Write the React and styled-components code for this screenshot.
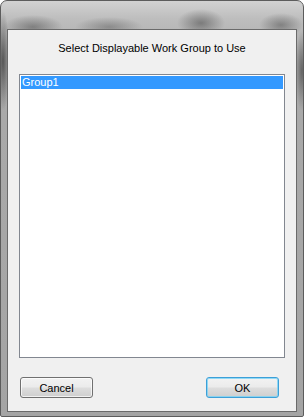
import React from "react";
import styled, {createGlobalStyle} from "styled-components";

const Global = createGlobalStyle`
  html, body {
    margin: 0;
    padding: 0;
    background: #ffffff;
  }
`;

const Frame = styled.div`
  box-sizing: border-box;
  width: 304px;
  height: 417px;
  border: 1px solid #5c5c5c;
  border-radius: 7px 7px 2px 2px;
  padding: 28px 6px 4px 6px;
  display: flex;
  background:
    radial-gradient(ellipse 30px 12px at 32px 26px, rgba(70, 70, 70, 0.5), transparent),
    radial-gradient(ellipse 34px 10px at 108px 26px, rgba(70, 70, 70, 0.4), transparent),
    radial-gradient(ellipse 24px 14px at 200px 22px, rgba(60, 60, 60, 0.5), transparent),
    radial-gradient(ellipse 22px 12px at 280px 24px, rgba(60, 60, 60, 0.45), transparent),
    radial-gradient(ellipse 7px 50px at 2px 60px, rgba(30, 30, 30, 0.6), transparent),
    radial-gradient(ellipse 7px 40px at 301px 70px, rgba(30, 30, 30, 0.5), transparent),
    linear-gradient(180deg, #d2d2d2 0px, #bdbdbd 18px, #aaaaaa 60px, #a4a4a4 100%);
`;

const Client = styled.div`
  box-sizing: border-box;
  flex: 1;
  border: 1px solid #6a6a6a;
  background: #f0f0f0;
  display: flex;
  flex-direction: column;
  padding: 0 11px;
  font-family: "Liberation Sans", Arial, sans-serif;
  font-size: 11px;
  color: #000;
`;

const Title = styled.div`
  margin-top: 12px;
  height: 13px;
  line-height: 13px;
  text-align: center;
`;

const ListBox = styled.div`
  box-sizing: border-box;
  margin-top: 19px;
  height: 284px;
  border: 1px solid #828790;
  background: #ffffff;
  padding: 1px;
`;

const Row = styled.div`
  height: 13px;
  line-height: 13px;
  padding-left: 1px;
  background: ${p => (p.$selected ? "#3399ff" : "transparent")};
  color: ${p => (p.$selected ? "#ffffff" : "#000000")};
`;

const Footer = styled.div`
  margin-top: auto;
  margin-bottom: 13px;
  display: flex;
  justify-content: space-between;
  padding: 0 6px 0 1px;
`;

const Button = styled.button`
  box-sizing: border-box;
  width: 73px;
  height: 21px;
  padding: 0;
  border: 1px solid ${p => (p.$default ? "#3c9fd8" : "#707070")};
  border-radius: 3px;
  font-family: "Liberation Sans", Arial, sans-serif;
  font-size: 11px;
  color: #000;
  background: linear-gradient(180deg, #f2f2f2 0%, #ebebeb 48%, #dddddd 52%, #cfcfcf 100%);
  box-shadow: inset 0 0 0 1px ${p => (p.$default ? "rgba(120, 210, 245, 0.8)" : "rgba(255, 255, 255, 0.7)")};
`;

export default function App() {
  return (
    <>
      <Global />
      <Frame>
        <Client>
          <Title>Select Displayable Work Group to Use</Title>
          <ListBox>
            <Row $selected>Group1</Row>
          </ListBox>
          <Footer>
            <Button>Cancel</Button>
            <Button $default>OK</Button>
          </Footer>
        </Client>
      </Frame>
    </>
  );
}
